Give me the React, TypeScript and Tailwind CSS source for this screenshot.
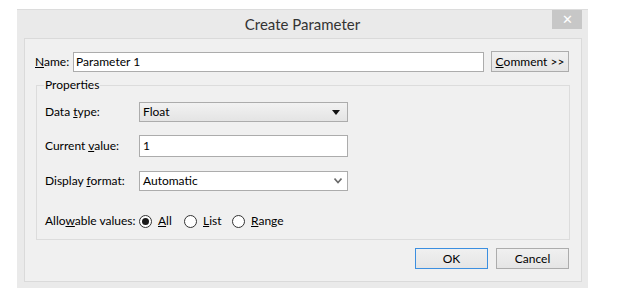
import React from "react";

const font = { fontFamily: 'Lato, "Liberation Sans", Arial, sans-serif' };

function U({ children }: { children: React.ReactNode }) {
  return <span className="underline underline-offset-[1px]">{children}</span>;
}

function Radio({ checked, label, w }: { checked?: boolean; label: React.ReactNode; w: string }) {
  return (
    <label className={`flex items-center gap-[6px] ${w}`}>
      <span className="flex h-[13px] w-[13px] items-center justify-center rounded-full border border-[#333] bg-white">
        {checked && <span className="h-[7px] w-[7px] rounded-full bg-[#1a1a1a]" />}
      </span>
      <span>{label}</span>
    </label>
  );
}

export default function App() {
  return (
    <div className="h-[297px] w-[637px] bg-white pl-[17px] pt-[9px] text-[12px] text-black" style={font}>
      <div className="flex h-[279px] w-[571px] flex-col border-t border-[#dcdcdc] bg-[#eaeaea]">
        {/* title bar */}
        <div className="relative flex h-[28px] items-center justify-center">
          <span className="text-[15px] text-[#333]">Create Parameter</span>
          <button
            type="button"
            className="absolute right-[6px] top-[0px] flex h-[19px] w-[30px] items-center justify-center bg-[#c7c7c7] text-[13px] text-white"
          >
            ✕
          </button>
        </div>

        {/* client */}
        <div className="mx-[7px] flex h-[244px] w-[558px] flex-col border border-[#dadada] bg-[#f0f0f0] pl-[10px] pt-[12px]">
          <div className="flex h-[21px] items-center">
            <span className="w-[38px]">
              <U>N</U>ame:
            </span>
            <div className="flex h-[20px] w-[411px] items-center border border-[#acacac] bg-white px-[2px]">Parameter 1</div>
            <button
              type="button"
              className="ml-[7px] flex h-[21px] w-[78px] items-center justify-center border border-[#acacac] bg-gradient-to-b from-[#f0f0f0] to-[#e5e5e5]"
            >
              <U>C</U>omment &gt;&gt;
            </button>
          </div>

          {/* group box */}
          <div className="relative ml-[1px] mt-[13px] h-[155px] w-[534px] border border-[#dcdcdc] pl-[8px] pt-[16px]">
            <span className="absolute left-[7px] top-[-8px] bg-[#f0f0f0] px-[1px] leading-[14px]">Properties</span>
            <div className="flex h-[20px] items-center">
              <span className="w-[94px]">
                Data <U>t</U>ype:
              </span>
              <div className="flex h-[20px] w-[209px] items-center justify-between border border-[#acacac] bg-gradient-to-b from-[#f2f2f2] to-[#e4e4e4] pl-[3px] pr-[7px]">
                <span>Float</span>
                <svg width="8" height="5" viewBox="0 0 8 5">
                  <path d="M0 0h8L4 5z" fill="#111" />
                </svg>
              </div>
            </div>
            <div className="mt-[13px] flex h-[22px] items-center">
              <span className="w-[94px]">
                Current <U>v</U>alue:
              </span>
              <div className="flex h-[22px] w-[209px] items-center border border-[#acacac] bg-white pl-[3px]">1</div>
            </div>
            <div className="mt-[14px] flex h-[20px] items-center">
              <span className="w-[94px]">
                Display <U>f</U>ormat:
              </span>
              <div className="flex h-[20px] w-[209px] items-center justify-between border border-[#acacac] bg-white pl-[3px] pr-[5px]">
                <span>Automatic</span>
                <svg width="8" height="6" viewBox="0 0 8 6">
                  <path d="M0.5 0.5L4 4.5L7.5 0.5" fill="none" stroke="#6a6a6a" strokeWidth="1.6" />
                </svg>
              </div>
            </div>
            <div className="mt-[20px] flex h-[20px] items-center">
              <span className="w-[94px]">
                Allo<U>w</U>able values:
              </span>
              <div className="flex items-center">
                <Radio
                  checked
                  w="w-[45px]"
                  label={
                    <>
                      <U>A</U>ll
                    </>
                  }
                />
                <Radio
                  w="w-[48px]"
                  label={
                    <>
                      <U>L</U>ist
                    </>
                  }
                />
                <Radio
                  w="w-[60px]"
                  label={
                    <>
                      <U>R</U>ange
                    </>
                  }
                />
              </div>
            </div>
          </div>

          <div className="mt-[8px] flex w-[534px] justify-end gap-[8px]">
            <button
              type="button"
              className="flex h-[21px] w-[73px] items-center justify-center border border-[#3c8fe0] bg-gradient-to-b from-[#f0f0f0] to-[#e5e5e5]"
            >
              OK
            </button>
            <button
              type="button"
              className="flex h-[21px] w-[73px] items-center justify-center border border-[#acacac] bg-gradient-to-b from-[#f0f0f0] to-[#e5e5e5]"
            >
              Cancel
            </button>
          </div>
        </div>
      </div>
    </div>
  );
}
